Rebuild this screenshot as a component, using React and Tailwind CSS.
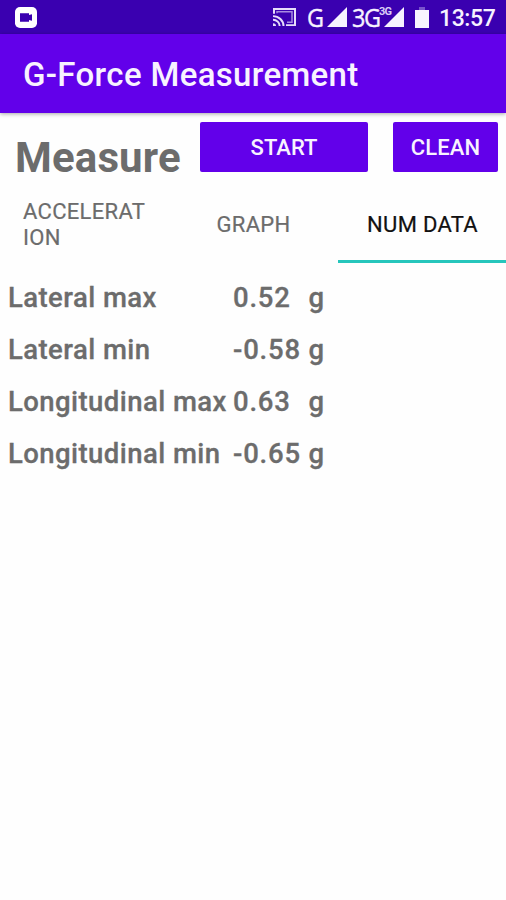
const rows = [
  ['Lateral max', '0.52'],
  ['Lateral min', '-0.58'],
  ['Longitudinal max', '0.63'],
  ['Longitudinal min', '-0.65'],
];

function Signal({ className }) {
  return (
    <svg className={className} viewBox="0 0 20 20" preserveAspectRatio="none" fill="#f6f2ff">
      <path d="M0 20 20 0V20Z" />
    </svg>
  );
}

function StatusBar() {
  return (
    <header className="flex h-[34px] items-start bg-[#3a00b0] text-[#f6f2ff]">
      <svg className="ml-[15px] mt-[7px] h-[21px] w-[22px] shrink-0" viewBox="0 0 22 22" preserveAspectRatio="none">
        <rect width="22" height="22" rx="5" fill="#fff" />
        <path d="M5 6.500h9v2l3-1v7l-3-1v2H5z" fill="#3a00b0" />
      </svg>
      <svg className="ml-[236px] mt-[8px] h-[19px] w-[23px] shrink-0" viewBox="0 0 23 20" preserveAspectRatio="none" fill="none" stroke="#e6dcfa" strokeWidth="2">
        <path d="M1 6V1h21v17h-9" />
        <path d="M4 5.500V4h15v11h-5" stroke="#a78be0" strokeWidth="1.500" />
        <path d="M0 8.500a10.500 10.500 0 0 1 10.500 10.500M0 12.300a6.700 6.700 0 0 1 6.700 6.700" />
        <path d="M0 16a3 3 0 0 1 3 3H0z" fill="#e6dcfa" stroke="none" />
      </svg>
      <span className="ml-[11px] mt-[4px] w-[18px] origin-left scale-x-90 font-['Open_Sans',sans-serif] text-[26px] leading-[26px] [-webkit-text-stroke:0.4px_#f6f2ff]">G</span>
      <Signal className="ml-[2px] mt-[7px] h-[20px] w-[20px] shrink-0" />
      <span className="ml-[5px] mt-[4px] w-[27px] origin-left scale-x-90 whitespace-nowrap font-['Open_Sans',sans-serif] text-[26px] leading-[26px] tracking-[-1.500px] [-webkit-text-stroke:0.4px_#f6f2ff]">3G</span>
      <span className="mt-[6px] w-[5px] whitespace-nowrap text-[11px] font-bold leading-[12px] tracking-[-0.8px] text-[#d9ccf5]">3G</span>
      <Signal className="mt-[7px] h-[20px] w-[20px] shrink-0" />
      <svg className="ml-[11px] mt-[7px] h-[21px] w-[14px] shrink-0" viewBox="0 0 14 21">
        <path d="M4 0h6v3H4z" fill="#7954cc" />
        <path d="M0 3h14v18H0z" fill="#f8f5ff" />
      </svg>
      <span className="ml-[10px] mt-[6px] whitespace-nowrap text-[23px] font-medium leading-[26px] tracking-[-0.4px]">13:57</span>
    </header>
  );
}

export default function App() {
  return (
    <div className="h-[900px] w-[506px] overflow-hidden bg-[#fefefe] font-[Roboto,sans-serif] text-[#6c6c6c]">
      <StatusBar />
      <div className="flex h-[79px] items-center bg-[#6200ea] pl-[23px] pt-[3px] text-[33px] font-medium text-[#f8f2ff] shadow-[0_1px_4px_rgba(0,0,0,0.35)]">
        <h1 className="whitespace-nowrap tracking-[0.34px]">G-Force Measurement</h1>
      </div>
      <section className="flex h-[73px] items-start pt-[9px]">
        <h2 className="ml-[15px] mt-[11px] w-[185px] text-[42px] font-bold leading-[50px] tracking-[0.15px]">Measure</h2>
        <button className="h-[50px] w-[168px] rounded-[2px] bg-[#6200ea] text-[22px] font-medium text-[#f8f2ff]">START</button>
        <button className="ml-[25px] h-[50px] w-[105px] rounded-[2px] bg-[#6200ea] text-[22px] font-medium text-[#f8f2ff] tracking-[0.15px]">CLEAN</button>
      </section>
      <nav className="grid h-[77px] grid-cols-[169px_169px_168px] text-[22px] leading-[26px] tracking-[0.3px] [-webkit-text-stroke:0.2px_currentColor]">
        <div className="flex items-center pl-[23px]"><span>ACCELERAT<br />ION</span></div>
        <div className="flex items-center justify-center">GRAPH</div>
        <div className="flex items-center justify-center border-b-[3px] border-[#26c6bc] pl-px pt-[3px] text-[#111]">NUM DATA</div>
      </nav>
      <main className="pl-[8px] pt-[9px] text-[27.500px] font-medium tracking-[0.43px] [-webkit-text-stroke:0.3px_currentColor]">
        {rows.map(([label, value]) => (
          <div key={label} className="grid h-[52px] grid-cols-[225px_75px_20px] items-center whitespace-nowrap">
            <span>{label}</span>
            <span className="tracking-[0.8px]">{value}</span>
            <span className="pl-[0.500px]">g</span>
          </div>
        ))}
      </main>
    </div>
  );
}
